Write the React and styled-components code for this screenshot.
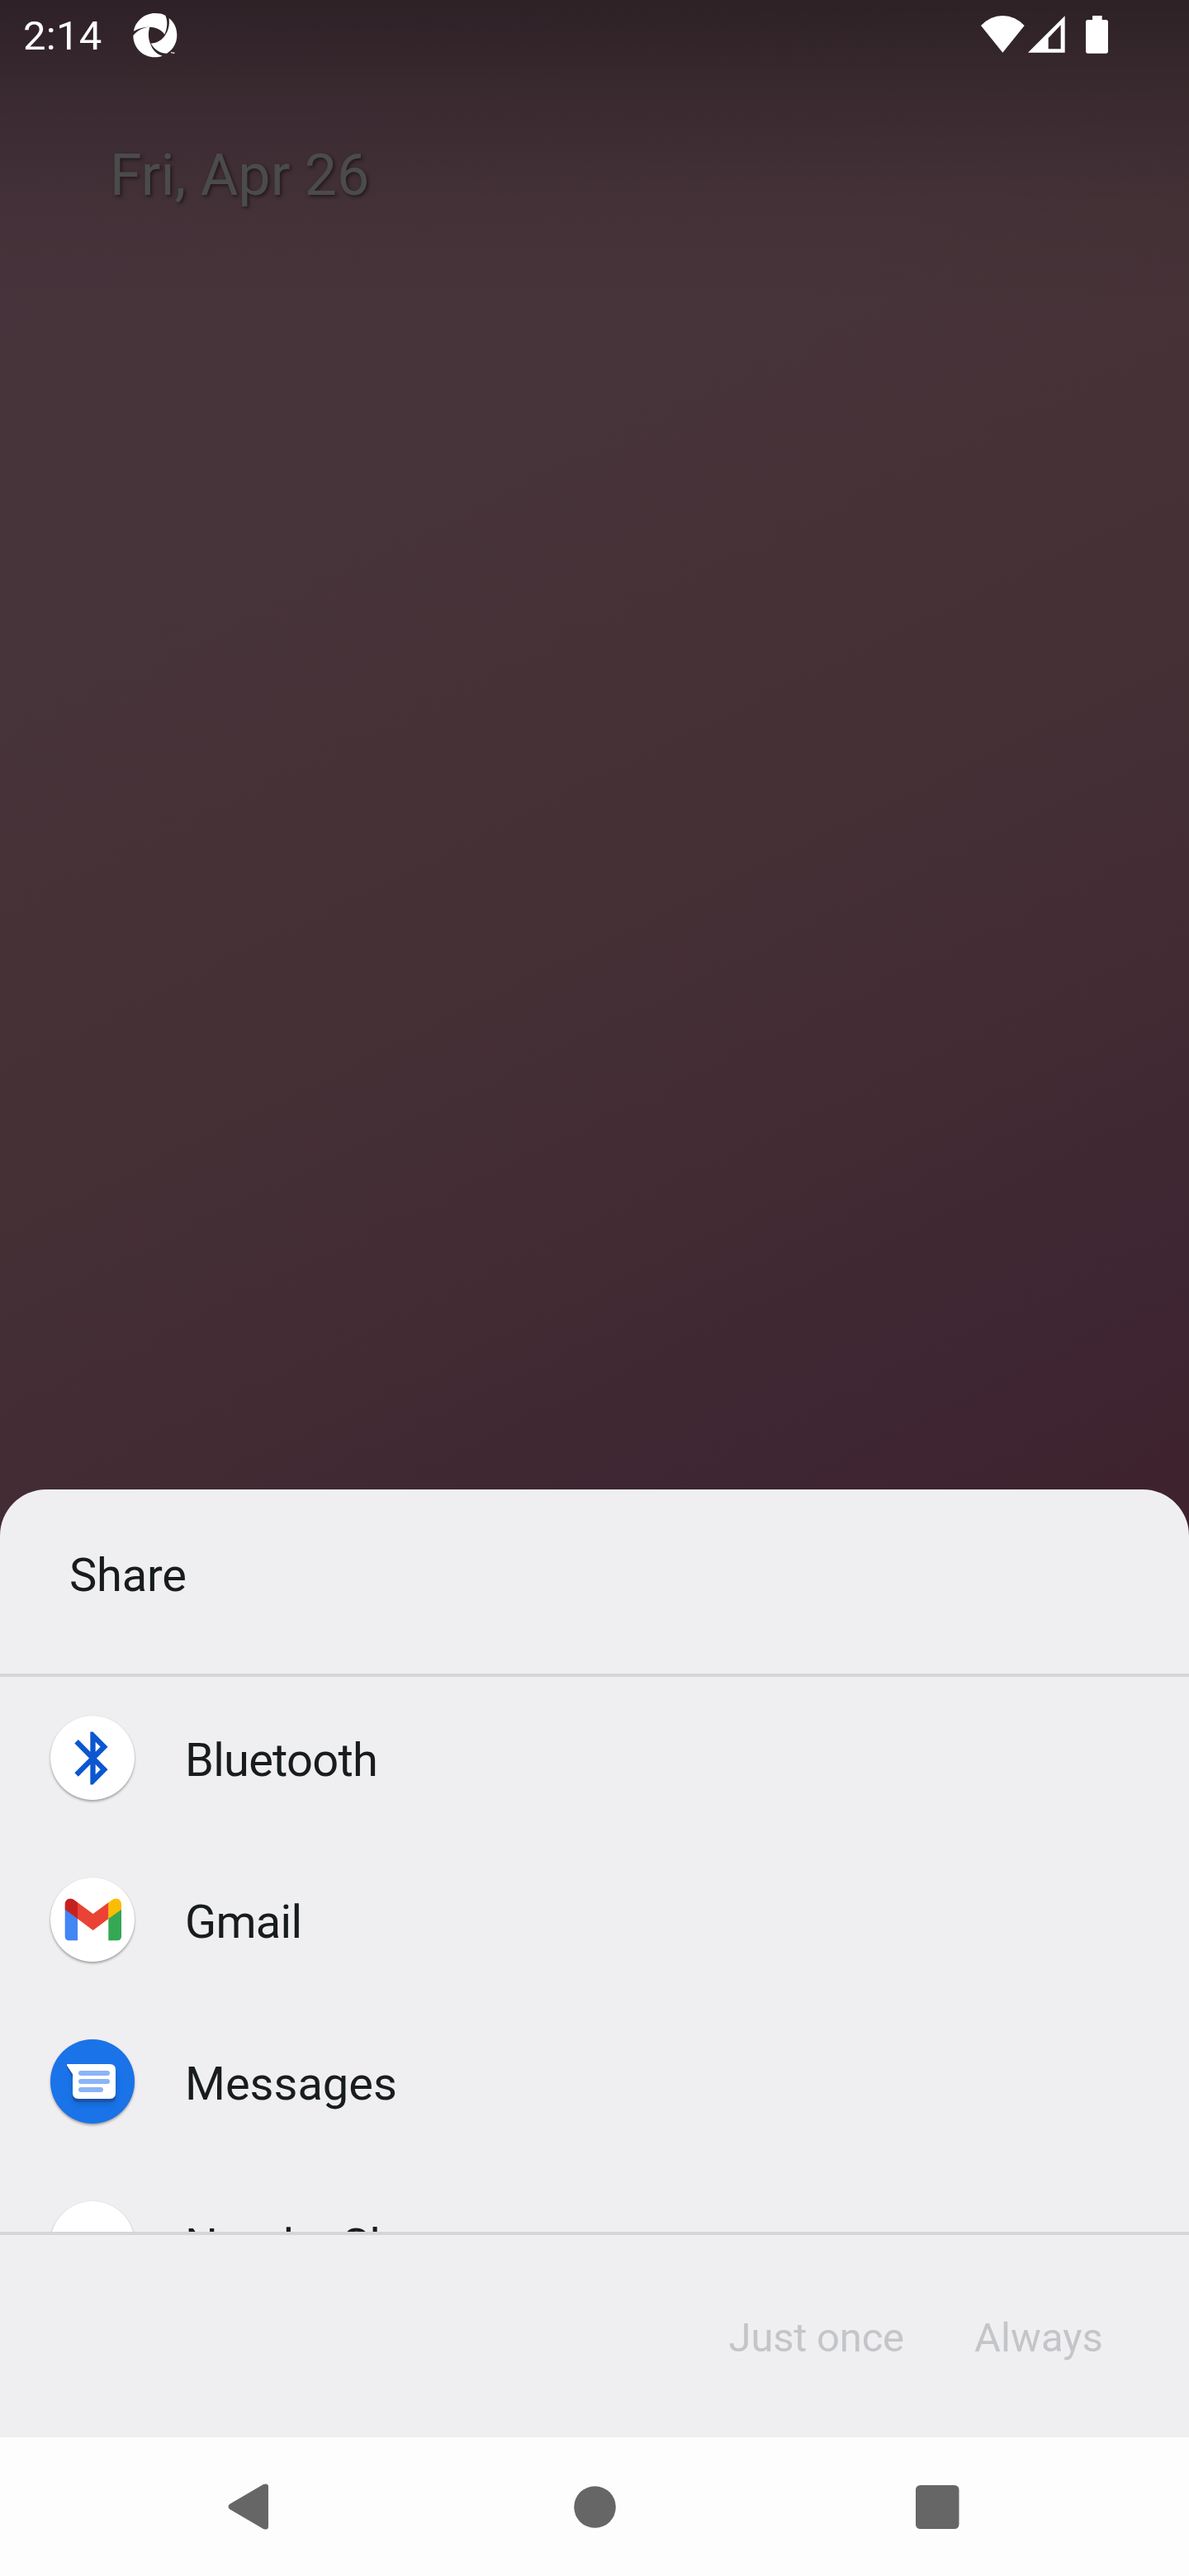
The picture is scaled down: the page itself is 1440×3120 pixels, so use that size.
import React from "react";
import styled, { createGlobalStyle } from "styled-components";

const GlobalStyle = createGlobalStyle`
  * { box-sizing: border-box; }
  body { margin: 0; }
`;

const Screen = styled.div`
  width: 1440px;
  height: 3120px;
  display: flex;
  flex-direction: column;
  overflow: hidden;
  font-family: Roboto, "Liberation Sans", sans-serif;
  color: #191c1d;
  background:
    linear-gradient(180deg, rgba(0, 0, 0, 0.36) 0, rgba(0, 0, 0, 0.16) 140px, rgba(0, 0, 0, 0.04) 270px, transparent 380px),
    linear-gradient(154deg, #47333c 0, #47343a 700px, #453136 1150px, #442e35 1450px, #422b33 1700px, #3e2632 1980px, #3e222d 2300px) 0 0 / 1440px 1880px no-repeat,
    #3c242e;
`;

const StatusBar = styled.header`
  height: 88px;
  padding: 15px 98px 0 28px;
  display: flex;
  align-items: flex-start;
  color: #fff;
`;

const Clock = styled.time`
  font-size: 49px;
  line-height: 57px;
  letter-spacing: 0.3px;
  width: 133px;
`;

const StatusIcons = styled.div`
  margin-left: auto;
  padding-top: 4px;
  display: flex;
`;

const Glyph = styled.svg`
  display: block;
  flex: none;
  width: ${(p) => p.$w}px;
  height: ${(p) => p.$h}px;
  margin: ${(p) => p.$m || 0};
  overflow: visible;
`;

const Home = styled.main`
  flex: 1;
  padding: 83px 0 0 133px;
`;

const DateLabel = styled.div`
  font-size: 70px;
  line-height: 82px;
  color: #4b4b4b;
  text-shadow: 2px 2px 4px rgba(0, 0, 0, 0.5);
`;

const Sheet = styled.section`
  background: #efeff1;
  border-radius: 56px 56px 0 0;
`;

const SheetTitle = styled.h1`
  margin: 0;
  height: 223px;
  padding: 71px 84px 0;
  font-size: 56px;
  line-height: 66px;
  font-weight: 400;
  letter-spacing: -0.2px;
`;

const AppList = styled.ul`
  margin: 0;
  padding: 0;
  height: 680px;
  overflow: hidden;
  list-style: none;
  border: solid #d6d6d8;
  border-width: 4px 0;
`;

const AppRow = styled.li`
  height: 196px;
  padding-left: 61px;
  display: flex;
  align-items: center;
  gap: 61px;
`;

const AppIcon = styled.div`
  width: 102px;
  height: 102px;
  border-radius: 50%;
  background: ${(p) => p.$color};
  box-shadow: 0 2px 3px rgba(0, 0, 0, 0.32), 0 0 1px rgba(0, 0, 0, 0.12);
`;

const AppName = styled.span`
  padding-top: 6px;
  font-size: 56px;
  line-height: 66px;
  letter-spacing: ${(p) => p.$tracking}px;
`;

const Actions = styled.div`
  height: 245px;
  padding: 96px 104px 0 0;
  display: flex;
  justify-content: flex-end;
  align-items: flex-start;
  gap: 85px;
`;

const Action = styled.button`
  padding: 0;
  border: 0;
  background: none;
  font: 400 49px/57px Roboto, "Liberation Sans", sans-serif;
  letter-spacing: ${(p) => p.$tracking}px;
  color: #c4c5c8;
`;

const NavBar = styled.nav`
  height: 168px;
  padding-left: 276px;
  display: flex;
  align-items: center;
  background: #fdfdfd;
`;

const BluetoothArt = () => (
  <Glyph $w={102} $h={102} viewBox="0 0 306 306">
    <path
      transform="translate(40.5 39) scale(9.5 9.6)"
      fill="#0b57d0"
      d="M17.71 7.71L12 2h-1v7.59L6.41 5 5 6.41 10.59 12 5 17.59 6.41 19 11 14.41V22h1l5.71-5.71-4.3-4.29 4.3-4.29zM13 5.83l1.88 1.88L13 9.59V5.83zm1.88 10.46L13 18.17v-3.76l1.88 1.88z"
    />
  </Glyph>
);

const GmailArt = () => (
  <Glyph $w={102} $h={102} viewBox="0 0 306 306">
    <path fill="#4285f4" d="M53 114L99 148V229H68Q53 229 53 214Z" />
    <path fill="#34a853" d="M258 114L211 148V229H243Q258 229 258 214Z" />
    <path fill="#ea4335" d="M98 90L155 132L212 90V149L155 192L98 149Z" />
    <path fill="#c5221f" d="M53 97C53 78 73 69 89 83L99 91V150L53 116Z" />
    <path fill="#fbbc04" d="M258 97C258 78 238 69 222 83L211 91V150L258 116Z" />
  </Glyph>
);

const MessagesArt = () => (
  <Glyph $w={102} $h={102} viewBox="0 0 306 306">
    <defs>
      <filter id="bubbleShade" x="-30%" y="-30%" width="160%" height="180%">
        <feGaussianBlur stdDeviation="11" />
      </filter>
    </defs>
    <rect x="81" y="112" width="156" height="122" rx="22" fill="#1553a8" opacity=".6" filter="url(#bubbleShade)" />
    <path fill="#1a53aa" d="M59 90V101L81 139V207Q81 228 102 228H216Q237 228 237 207V111Z" />
    <path fill="#fff" d="M63 90H216Q237 90 237 111V195Q237 216 216 216H102Q81 216 81 195V127L60 95Q58 90 63 90Z" />
    <g fill="#8ab4f8">
      <rect x="102" y="114" width="114" height="18" rx="9" />
      <rect x="102" y="144" width="114" height="18" rx="9" />
      <rect x="102" y="174" width="90" height="18" rx="9" />
    </g>
  </Glyph>
);

const apps = [
  { name: "Bluetooth", color: "#fff", tracking: -0.75, Art: BluetoothArt },
  { name: "Gmail", color: "#fff", tracking: -0.7, Art: GmailArt },
  { name: "Messages", color: "#1a73e8", tracking: 0, Art: MessagesArt },
  { name: "Nearby Share", color: "#fff", tracking: 0, Art: null },
];

export default function App() {
  return (
    <Screen>
      <GlobalStyle />
      <StatusBar>
        <Clock>2:14</Clock>
        <Glyph $w={53.3} $h={53.3} $m="1px 0 0" viewBox="0 0 160 160" fill="#fff">
          <path d="M3 65C9 28 43 0 80 0C95 0 108 2 118 8C127 28 126 54 115 77C94 48 49 41 3 65Z" />
          <path d="M131 18C151 34 160 56 160 80C160 108 146 132 123 146C100 146 80 134 65 110C89 108 106 97 117 80C129 63 134 43 131 18Z" />
          <path d="M1 81C17 61 38 51 61 50C55 69 55 91 63 110C71 134 87 149 107 155C98 158 89 160 80 160C36 160 1 126 1 81Z" />
          <path d="M138 142H144V144H142V147H140V144H138ZM145 142H147L148 144L149 142H151V147H149V145L148 147L147 145V147H145Z" />
        </Glyph>
        <StatusIcons>
          <Glyph $w={52.7} $h={45} viewBox="0 0 158 135" fill="#fff">
            <path d="M0 36Q34 0 79 0Q124 0 158 36L79 134Z" />
          </Glyph>
          <Glyph $w={45} $h={45} $m="0 0 0 4.3px" viewBox="0 0 135 135" fill="#fff">
            <path fillRule="evenodd" d="M0 134L134 1V134ZM74 81V121H119V34Z" />
          </Glyph>
          <Glyph $w={27} $h={46} $m="0 0 0 25px" viewBox="0 0 81 138" fill="#fff">
            <path d="M24 0H59V15H73Q81 15 81 23V129Q81 137 73 137H8Q0 137 0 129V23Q0 15 8 15H24Z" />
          </Glyph>
        </StatusIcons>
      </StatusBar>
      <Home>
        <DateLabel>Fri, Apr 26</DateLabel>
      </Home>
      <Sheet>
        <SheetTitle>Share</SheetTitle>
        <AppList>
          {apps.map(({ name, color, tracking, Art }) => (
            <AppRow key={name}>
              <AppIcon $color={color}>{Art && <Art />}</AppIcon>
              <AppName $tracking={tracking}>{name}</AppName>
            </AppRow>
          ))}
        </AppList>
        <Actions>
          <Action $tracking={-0.2}>Just once</Action>
          <Action $tracking={0.1}>Always</Action>
        </Actions>
      </Sheet>
      <NavBar>
        <Glyph $w={49} $h={56} viewBox="0 0 49 56" fill="#666">
          <path d="M2 25L43 1Q49-1 49 4V52Q49 57 43 55L2 31Q-1 28 2 25Z" />
        </Glyph>
        <Glyph $w={51} $h={51} $m="0 0 0 369.5px" viewBox="0 0 51 51" fill="#666">
          <circle cx="25.5" cy="25.5" r="25.3" />
        </Glyph>
        <Glyph $w={52.5} $h={53} $m="0 0 0 363px" viewBox="0 0 52.5 53" fill="#666">
          <rect width="52.5" height="53" rx="5.5" />
        </Glyph>
      </NavBar>
    </Screen>
  );
}
